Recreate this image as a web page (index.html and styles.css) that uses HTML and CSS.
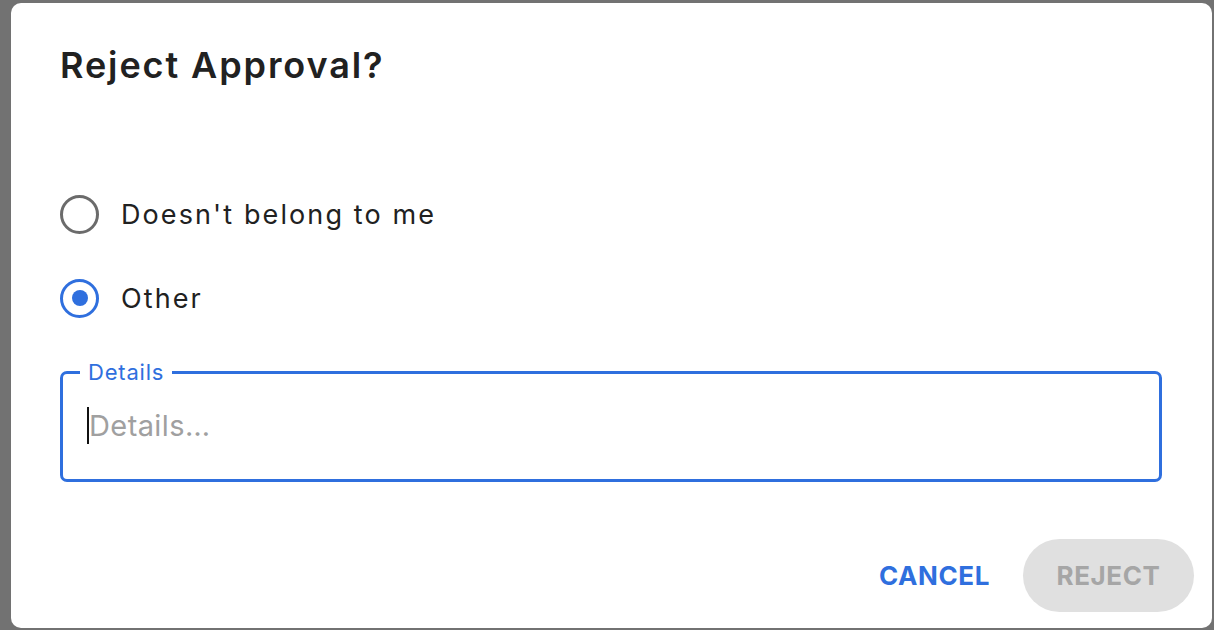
FILE: index.html
```html
<!DOCTYPE html>
<html>
<head>
<meta charset="utf-8">
<link rel="stylesheet" href="styles.css">
</head>
<body>
<div class="backdrop">
  <div class="dialog">
    <h2 class="title">Reject Approval?</h2>
    <div class="options">
      <label class="option">
        <span class="radio"></span>
        <span class="label-text">Doesn't belong to me</span>
      </label>
      <label class="option">
        <span class="radio checked"><span class="dot"></span></span>
        <span class="label-text">Other</span>
      </label>
    </div>
    <fieldset class="field">
      <legend class="legend">Details</legend>
      <div class="input"><span class="caret"></span><span class="placeholder">Details…</span></div>
    </fieldset>
    <div class="actions">
      <button class="btn cancel">CANCEL</button>
      <button class="btn reject">REJECT</button>
    </div>
  </div>
</div>
</body>
</html>
```
FILE: styles.css
```css
html, body {
  margin: 0;
  padding: 0;
}
body {
  font-family: Inter, "Noto Sans", sans-serif;
  background: #727272;
}
.backdrop {
  width: 1214px;
  height: 630px;
  background: #727272;
  padding: 3px 0 0 11px;
  box-sizing: border-box;
}
.dialog {
  width: 1201px;
  height: 625px;
  background: #fff;
  border-radius: 10px;
  box-sizing: border-box;
  padding: 42px 50px 0 49px;
  display: flex;
  flex-direction: column;
}
.title {
  margin: 0;
  font-size: 36px;
  line-height: 40px;
  font-weight: 600;
  letter-spacing: 1.9px;
  color: #212121;
}
.options {
  margin-top: 107px;
  display: flex;
  flex-direction: column;
  gap: 40px;
}
.option {
  display: flex;
  align-items: center;
  gap: 22px;
  height: 44px;
}
.radio {
  width: 39px;
  height: 39px;
  box-sizing: border-box;
  border: 3.5px solid #6b6b6b;
  border-radius: 50%;
  display: flex;
  align-items: center;
  justify-content: center;
}
.radio.checked {
  border-color: #2f6fde;
}
.dot {
  width: 16px;
  height: 16px;
  border-radius: 50%;
  background: #2f6fde;
}
.label-text {
  font-size: 27px;
  letter-spacing: 2.1px;
  color: #212121;
}
.field {
  margin: 41px 0 0 0;
  padding: 0 24px;
  border: 3px solid #2f6fde;
  border-radius: 7px;
  height: 121px;
  box-sizing: border-box;
}
.legend {
  padding: 0 8px;
  margin-left: -7px;
  font-size: 22px;
  line-height: 22px;
  letter-spacing: 0.8px;
  color: #2f6fde;
}
.input {
  display: flex;
  align-items: center;
  height: 96px;
  margin-top: -6px;
}
.caret {
  width: 2px;
  height: 37px;
  background: #111;
}
.placeholder {
  font-size: 29px;
  letter-spacing: 0.4px;
  color: #a0a0a0;
}
.actions {
  margin-top: auto;
  margin-bottom: 16px;
  margin-right: -32px;
  display: flex;
  justify-content: flex-end;
  align-items: center;
  gap: 33px;
}
.btn {
  font-family: Inter, "Noto Sans", sans-serif;
  font-weight: 700;
  font-size: 26px;
  border: none;
  background: none;
  cursor: pointer;
  letter-spacing: 0.6px;
}
.cancel {
  color: #2f6fde;
  padding: 0;
}
.reject {
  background: #e0e0e0;
  color: #a6a6a6;
  height: 73px;
  width: 171px;
  border-radius: 37px;
  padding: 0;
}
```
